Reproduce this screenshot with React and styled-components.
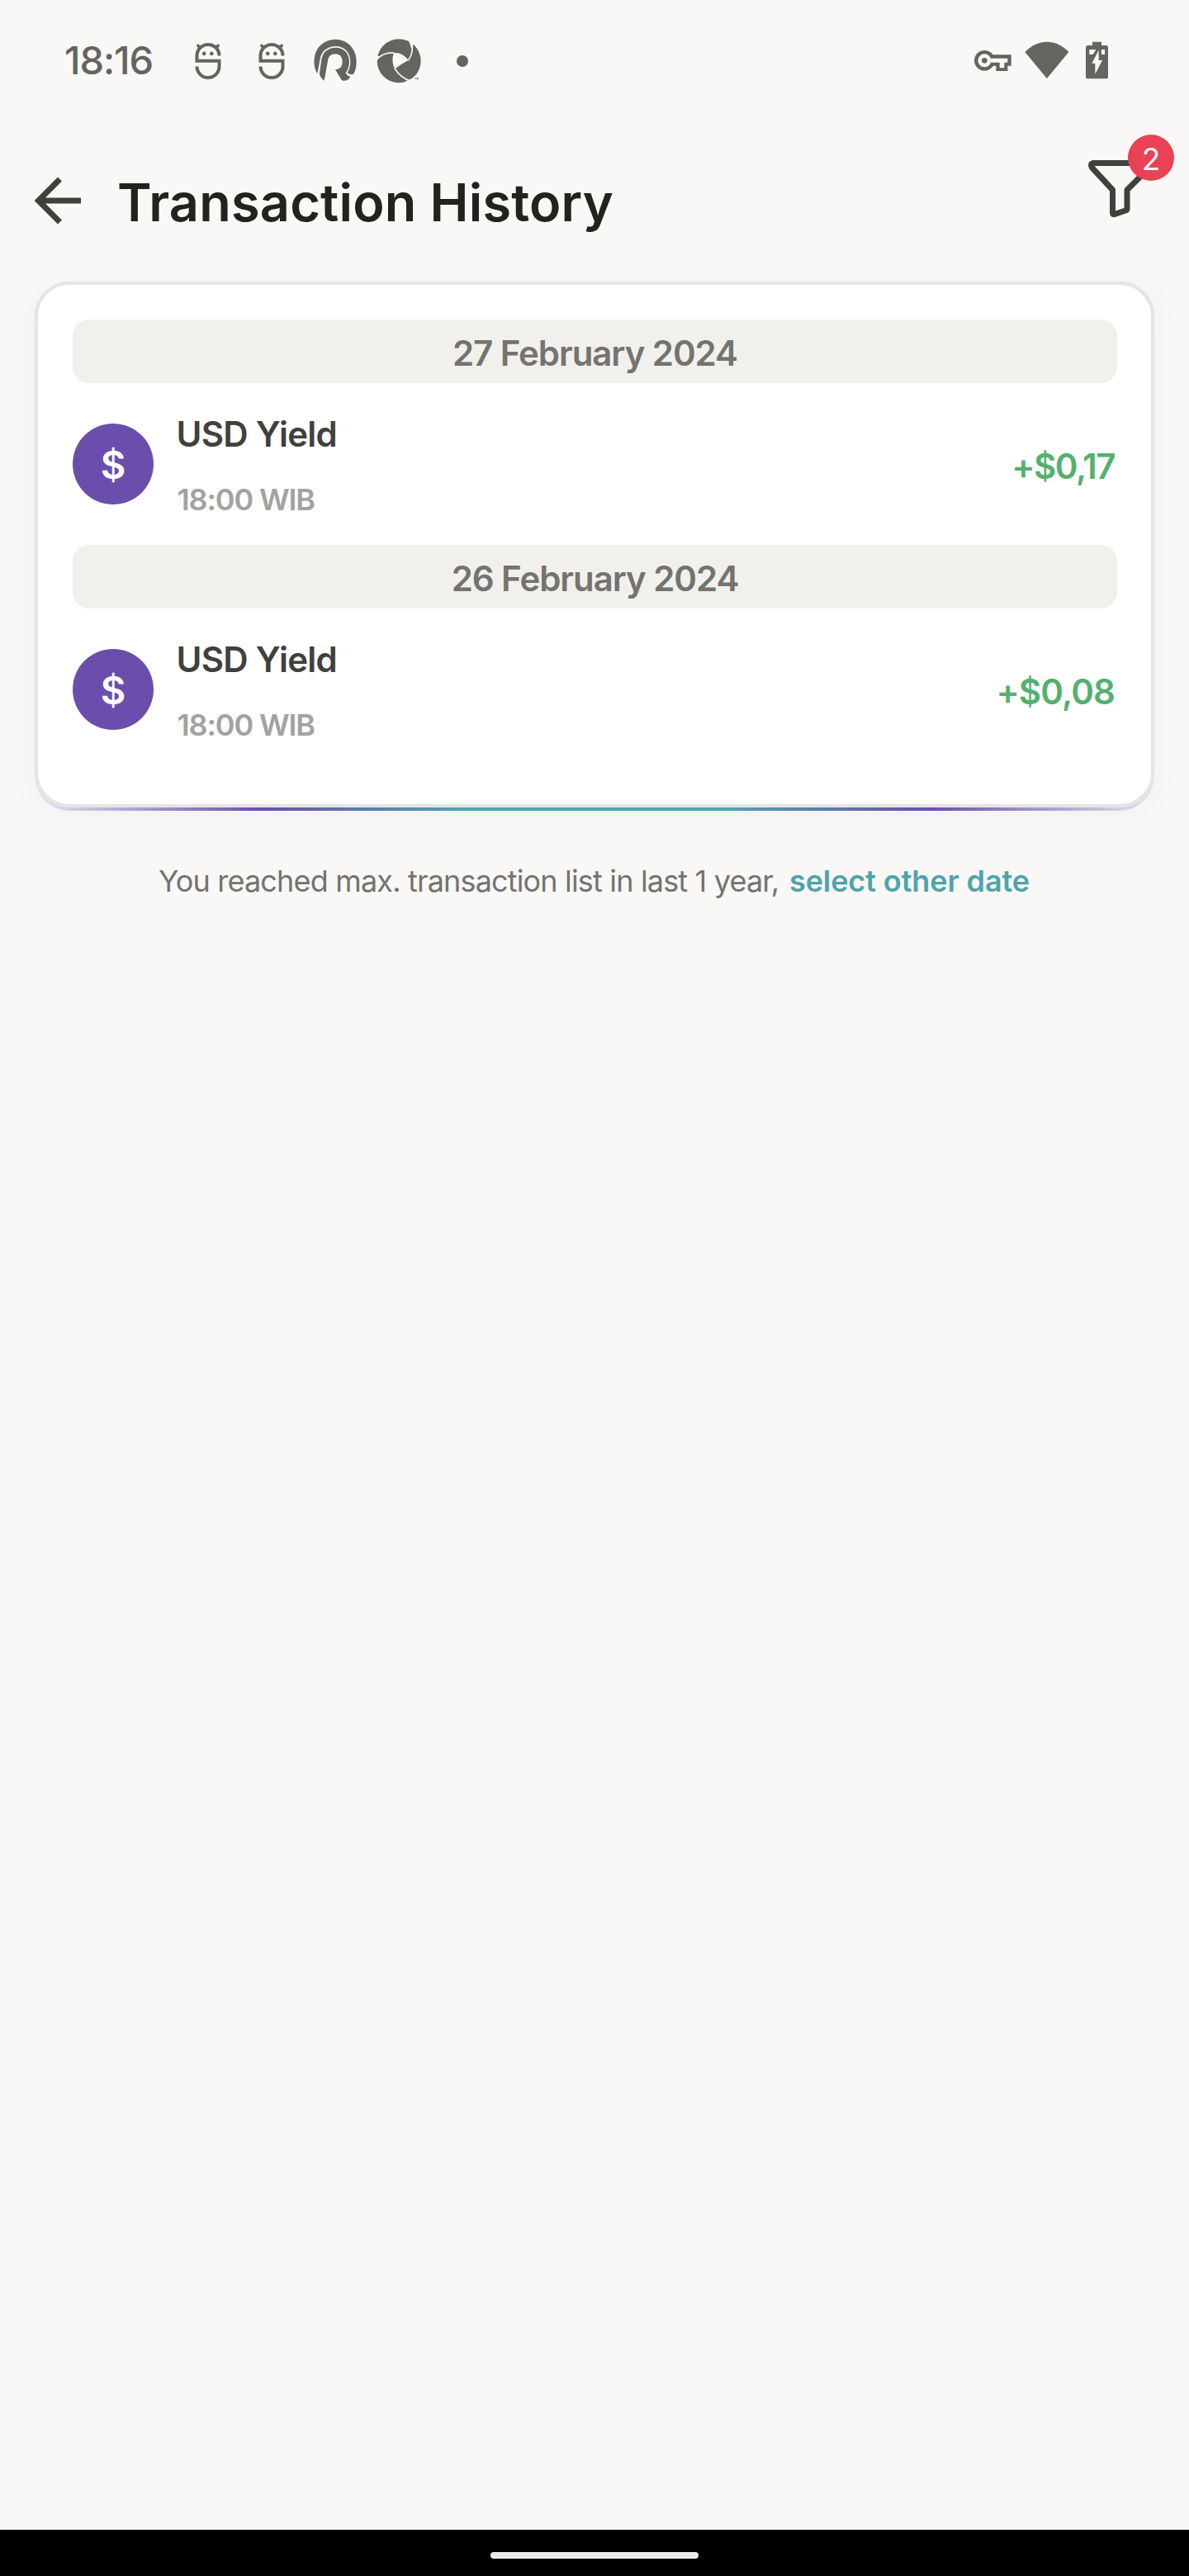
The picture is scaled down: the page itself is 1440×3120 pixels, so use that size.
import React from "react";
import styled, { createGlobalStyle } from "styled-components";

const GlobalStyle = createGlobalStyle`
  * { box-sizing: border-box; }
  body { margin: 0; background: #f9f8f6; }
`;

const Screen = styled.div`
  width: 1440px;
  height: 3120px;
  display: flex;
  flex-direction: column;
  background: #f9f8f6;
  font-family: Inter, "Liberation Sans", sans-serif;
  overflow: hidden;
`;

const StatusBar = styled.div`
  height: 147px;
  flex: none;
  display: flex;
  align-items: center;
  justify-content: space-between;
  padding: 0 98px 0 78px;
  color: #656461;
`;

const StatusGroup = styled.div`
  display: flex;
  align-items: center;
  height: 100%;
`;

const Clock = styled.span`
  width: 154px;
  padding-bottom: 3px;
  font-size: 47px;
  line-height: 57px;
  font-weight: 500;
  letter-spacing: -1.1px;
`;

const Glyph = styled.svg`
  display: block;
  flex: none;
  width: ${(p) => p.$w}px;
  height: ${(p) => p.$h}px;
  margin-left: ${(p) => p.$gap || 0}px;
  margin-top: ${(p) => p.$drop || 0}px;
`;

const Header = styled.header`
  height: 194px;
  flex: none;
  display: flex;
  align-items: flex-start;
  padding: 60px 42px 0 40px;
`;

const HeaderIcon = styled.button`
  position: relative;
  display: block;
  flex: none;
  padding: 0;
  border: 0;
  background: none;
  width: ${(p) => p.$w}px;
  height: ${(p) => p.$h}px;
  margin-top: ${(p) => p.$drop || 0}px;
  font-family: inherit;
`;

const Title = styled.h1`
  flex: 1;
  margin: 0 0 0 42px;
  font-size: 63px;
  line-height: 76px;
  font-weight: 600;
  letter-spacing: 0.2px;
  color: #23221f;
`;

const Badge = styled.span`
  position: absolute;
  left: 50px;
  top: -28px;
  width: 56px;
  height: 56px;
  padding-top: 2px;
  border-radius: 50%;
  display: flex;
  align-items: center;
  justify-content: center;
  background: #ea4156;
  color: #fff;
  font-size: 37px;
  line-height: 45px;
`;

const CardEdge = styled.div`
  flex: none;
  margin: 0 42px;
  padding-bottom: 3.5px;
  border-radius: 42px;
  background: linear-gradient(90deg, rgba(107, 78, 172, 0.12) 0%, #6b4eac 20%, #4fa4aa 38%, #4fa4aa 62%, #6b4eac 80%, rgba(107, 78, 172, 0.12) 100%);
  box-shadow: 0 3px 36px rgba(0, 0, 0, 0.035);
`;

const Card = styled.section`
  height: 637px;
  padding: 42px 41px 0 42px;
  border: 4px solid #e5e5e5;
  border-radius: 42px;
  background: #fff;
`;

const DateBand = styled.h2`
  margin: 0;
  height: 77px;
  padding-top: 3px;
  display: flex;
  align-items: center;
  justify-content: center;
  border-radius: 20px;
  background: #f1f0ec;
  color: #747370;
  font-size: 42px;
  line-height: 51px;
  font-weight: 600;
  letter-spacing: -1.05px;
`;

const Row = styled.div`
  height: 119px;
  display: flex;
  align-items: center;
  padding-right: 3px;
`;

const Coin = styled.div`
  flex: none;
  width: 98px;
  height: 98px;
  border-radius: 50%;
  display: flex;
  align-items: center;
  justify-content: center;
  background: #6b4eac;
  color: #fff;
  font-size: 47px;
  line-height: 57px;
  font-weight: 600;
`;

const Details = styled.div`
  flex: 1;
  display: flex;
  flex-direction: column;
  gap: 32px;
  margin-left: 27.5px;
  padding-top: 3px;
`;

const Name = styled.div`
  font-size: 42px;
  line-height: 51px;
  font-weight: 600;
  letter-spacing: -0.73px;
  color: #41403d;
`;

const Time = styled.div`
  padding-left: 1px;
  font-size: 36px;
  line-height: 44px;
  font-weight: 600;
  letter-spacing: -1.15px;
  color: #a3a29f;
`;

const Amount = styled.div`
  padding-top: 5px;
  font-size: 42px;
  line-height: 51px;
  font-weight: 600;
  letter-spacing: ${(p) => p.$track}px;
  color: #54b06f;
`;

const Group = styled.div`
  height: 273px;
  ${Row} { height: 196px; }
`;

const Note = styled.p`
  flex: none;
  margin: 63.5px 0 0;
  padding-left: 192px;
  display: flex;
  font-size: 36px;
  line-height: 44px;
  letter-spacing: -0.83px;
  color: #747370;
  white-space: nowrap;
`;

const NoteText = styled.span`
  width: 764px;
`;

const NoteLink = styled.a`
  font-weight: 600;
  letter-spacing: -0.1px;
  color: #4fa4aa;
`;

const NavBar = styled.div`
  flex: none;
  height: 56px;
  margin-top: auto;
  display: flex;
  align-items: center;
  justify-content: center;
  padding-top: 6px;
  background: #000;
`;

const Handle = styled.div`
  width: 252px;
  height: 8px;
  border-radius: 4px;
  background: #ebebeb;
`;

const BG = "#f9f8f6";

function Robot({ gap }) {
  return (
    <Glyph $w={32} $h={46} $gap={gap} viewBox="235.5 50.5 32 46" fill="none" stroke="currentColor" strokeWidth="4">
      <path d="M265 67A13.5 13.5 0 0 0 238 67V73.3H265V80A13.5 13.5 0 0 1 238 80" />
      <path d="M238.3 53.8L243 58.5M264.7 53.8L260 58.5" strokeWidth="3.6" />
      <circle cx="246.7" cy="64.4" r="2.3" fill="currentColor" stroke="none" />
      <circle cx="255.8" cy="64.4" r="2.3" fill="currentColor" stroke="none" />
    </Glyph>
  );
}

function Arches() {
  return (
    <Glyph $w={52} $h={52} $gap={35} $drop={-1} viewBox="178 52 156 156" fill="currentColor">
      <path d="M191 178C178 158 178 134 181 118C187 80 218 54 257 54C300 54 333 88 333 133C333 155 329 170 322 180C315 183 306 181 300 175C307 165 311 150 311 135C311 103 290 79 258 79C225 79 205 100 201 125Z" />
      <path d="M216 204C205 196 199 186 199 178L206 127C211 100 230 84 257 84C288 84 307 105 307 135C307 152 302 166 294 175C297 183 303 188 311 189C306 200 298 204 288 204C283 204 280 202 277 198L256 164C275 162 282 150 282 135C282 118 272 107 257 107C240 107 231 117 229 132Z" />
    </Glyph>
  );
}

function Shutter() {
  return (
    <Glyph $w={54} $h={54} $gap={24} viewBox="406 50 162 162">
      <circle cx="487.500" cy="130.500" r="79.500" fill="currentColor" />
      <path d="M468 102Q498 97 522 128Q498 140 472 160Q459 132 468 102Z" fill={BG} />
      <g fill="none" stroke={BG} strokeWidth="5">
        <path d="M404 127C424 106 446 99 470 101" />
        <path d="M533 58C540 84 536 108 521 129" />
        <path d="M472 158C487 181 503 196 530 203" />
      </g>
      <path d="M524 60L541 66L534 88Z" fill={BG} />
      <path d="M405 113L405 134L420 113Z" fill={BG} />
      <path d="M508 207L534 194L545 197L540 212Z" fill={BG} />
      <path d="M546 192H551V194H549.500V198H547.500V194H546ZM552 192H558V198H556V195L555 197L554 195V198H552Z" fill="currentColor" />
    </Glyph>
  );
}

function VpnKey() {
  return (
    <Glyph $w={44.7} $h={25} $drop={0} viewBox="59 92 134 75">
      <g fill="currentColor">
        <circle cx="96" cy="129" r="37" />
        <path d="M118 108H193V148H180V168H138V148H118Z" />
      </g>
      <g fill={BG}>
        <circle cx="96" cy="129" r="24" />
        <path d="M114 121H180V136H168V156H151V136H114Z" />
      </g>
      <circle cx="96" cy="129" r="10" fill="currentColor" />
    </Glyph>
  );
}

function Wifi() {
  return (
    <Glyph $w={54} $h={45} $gap={16.3} $drop={-3} viewBox="242 58 162 135" fill="currentColor">
      <path d="M243 97C290 48 355 48 402 97L322.500 193Z" />
    </Glyph>
  );
}

function Battery() {
  return (
    <Glyph $w={27} $h={46} $gap={20} $drop={-1} viewBox="465 60 81 138">
      <path d="M489 62H522V75H538Q546 75 546 83V188Q546 196 538 196H473Q465 196 465 188V83Q465 75 473 75H489Z" fill="currentColor" />
      <path d="M478 90H502L491 108H478ZM522 90H534V108H522Z" fill={BG} />
      <path d="M512 92L487 140H499V179L525 129H512Z" fill={BG} />
    </Glyph>
  );
}

const history = [
  { date: "27 February 2024", name: "USD Yield", time: "18:00 WIB", amount: "+$0,17", track: -1.5 },
  { date: "26 February 2024", name: "USD Yield", time: "18:00 WIB", amount: "+$0,08", track: -0.9 },
];

export default function App() {
  return (
    <Screen>
      <GlobalStyle />
      <StatusBar>
        <StatusGroup>
          <Clock>18:16</Clock>
          <Robot gap={3.5} />
          <Robot gap={45} />
          <Arches />
          <Shutter />
          <Glyph $w={14} $h={14} $gap={43} viewBox="0 0 14 14" fill="currentColor">
            <circle cx="7" cy="7" r="7" />
          </Glyph>
        </StatusGroup>
        <StatusGroup>
          <VpnKey />
          <Wifi />
          <Battery />
        </StatusGroup>
      </StatusBar>
      <Header>
        <HeaderIcon $w={60} $h={60} $drop={6} aria-label="Back">
          <Glyph $w={60} $h={60} viewBox="0 0 60 60" fill="none" stroke="#41403d" strokeWidth="7">
            <path d="M32.500 4L6.500 30L32.500 56M6.500 30H58" />
          </Glyph>
        </HeaderIcon>
        <Title>Transaction History</Title>
        <HeaderIcon $w={82} $h={74} $drop={-16} aria-label="Filter">
          <Glyph $w={82} $h={74} viewBox="1316 191 82 74" fill="none" stroke="#41403d" strokeWidth="7" strokeLinejoin="round">
            <path d="M1324 197.500H1389Q1394 200 1391 204L1365 230V253Q1365 254.500 1363 255L1350 259.500Q1347.500 260 1347.500 258V230L1322.500 203Q1320 198.500 1324 197.500Z" />
          </Glyph>
          <Badge>2</Badge>
        </HeaderIcon>
      </Header>
      <CardEdge>
        <Card>
          {history.map((h) => (
            <Group key={h.date}>
              <DateBand>{h.date}</DateBand>
              <Row>
                <Coin>$</Coin>
                <Details>
                  <Name>{h.name}</Name>
                  <Time>{h.time}</Time>
                </Details>
                <Amount $track={h.track}>{h.amount}</Amount>
              </Row>
            </Group>
          ))}
        </Card>
      </CardEdge>
      <Note>
        <NoteText>You reached max. transaction list in last 1 year,</NoteText>
        <NoteLink>select other date</NoteLink>
      </Note>
      <NavBar>
        <Handle />
      </NavBar>
    </Screen>
  );
}
